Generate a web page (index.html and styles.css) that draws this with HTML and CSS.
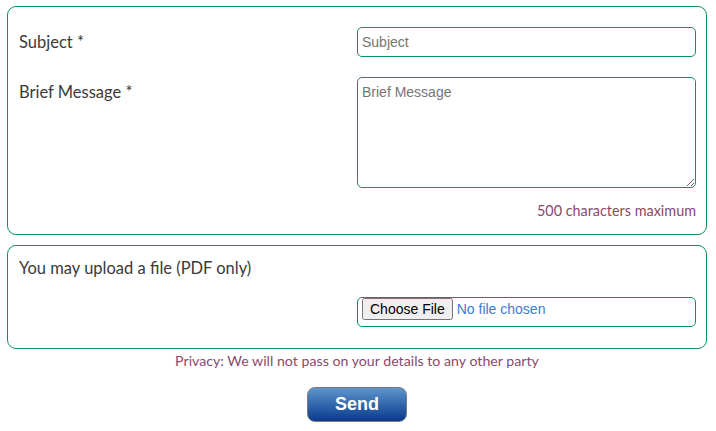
FILE: index.html
```html
<!DOCTYPE html>
<html>
<head>
  <title>Contact</title>
  <link rel="stylesheet" href="styles.css">
</head>
<body>
  <form class="contact">
    <fieldset class="box">
      <div class="row">
        <label for="subject">Subject *</label>
        <input id="subject" type="text" placeholder="Subject">
      </div>
      <div class="row">
        <label for="message">Brief Message *</label>
        <textarea id="message" placeholder="Brief Message"></textarea>
      </div>
      <p class="note">500 characters maximum</p>
    </fieldset>

    <fieldset class="box upload">
      <label class="upload-label" for="file">You may upload a file (PDF only)</label>
      <div class="row">
        <span></span>
        <input id="file" type="file" accept=".pdf">
      </div>
    </fieldset>

    <p class="privacy">Privacy: We will not pass on your details to any other party</p>

    <div class="actions">
      <button type="button" class="send">Send</button>
    </div>
  </form>
</body>
</html>
```

FILE: styles.css
```css
body {
  margin: 0;
  font-family: Lato, "Open Sans", sans-serif;
  color: #3a3a3a;
}
.contact {
  width: 700px;
  margin: 6px 0 0 7px;
}
.box {
  margin: 0;
  border: 1px solid #0b9168;
  border-radius: 9px;
  padding: 20px 10px 15px 11px;
  min-width: 0;
}
.row {
  display: grid;
  grid-template-columns: 338px 339px;
  margin-bottom: 20px;
}
.row label {
  font-size: 16.5px;
  line-height: 30px;
}
.row input[type="text"],
.row textarea {
  box-sizing: border-box;
  width: 339px;
  border: 1px solid #0b9168;
  border-radius: 5px;
  font-family: Arial, "Liberation Sans", sans-serif;
  font-size: 14px;
  padding: 4px;
  color: #333;
}
.row input[type="text"] {
  height: 30px;
}
.row textarea {
  height: 111px;
  padding-top: 6px;
  resize: vertical;
}
::placeholder {
  color: #757575;
}
.note {
  margin: -6px 0 0;
  text-align: right;
  font-size: 14.4px;
  color: #8a4a6c;
}
.upload {
  margin-top: 10px;
  padding-top: 10px;
  padding-bottom: 1px;
}
.upload-label {
  display: block;
  font-size: 16.5px;
  line-height: 24px;
}
.upload .row {
  margin-top: 17px;
}
.upload input[type="file"] {
  box-sizing: border-box;
  width: 339px;
  height: 30px;
  border: 1px solid #0b9168;
  border-radius: 5px;
  padding: 0 4px;
  font-family: Arial, "Liberation Sans", sans-serif;
  font-size: 14px;
  color: #3b7bd4;
}
.privacy {
  margin: 3px 0 0;
  text-align: center;
  font-size: 14.2px;
  color: #8a4a6c;
}
.actions {
  text-align: center;
  margin-top: 18px;
}
.send {
  width: 100px;
  height: 35px;
  border: 1px solid #7a7a7a;
  border-radius: 8px;
  background: linear-gradient(#5f95cc, #093a8d);
  color: white;
  font-family: Arial, "Liberation Sans", sans-serif;
  font-weight: bold;
  font-size: 18px;
  cursor: pointer;
}
```
